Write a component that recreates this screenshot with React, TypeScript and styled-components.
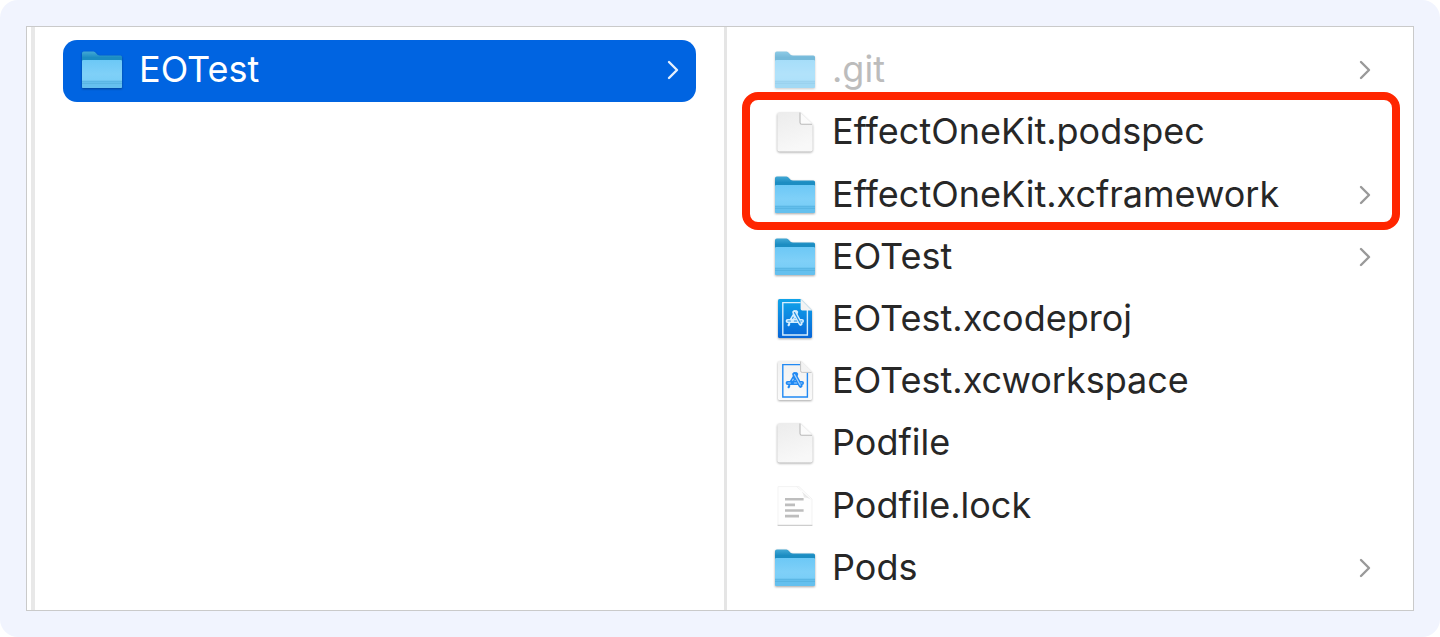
import React, { useId } from "react";
import styled, { createGlobalStyle } from "styled-components";

type Kind = "folder" | "document" | "text" | "project" | "workspace";

interface Entry {
  name: string;
  kind: Kind;
  opens?: boolean;
  hidden?: boolean;
}

const rootEntries: Entry[] = [{ name: "EOTest", kind: "folder", opens: true }];

const projectEntries: Entry[] = [
  { name: ".git", kind: "folder", opens: true, hidden: true },
  { name: "EffectOneKit.podspec", kind: "document" },
  { name: "EffectOneKit.xcframework", kind: "folder", opens: true },
  { name: "EOTest", kind: "folder", opens: true },
  { name: "EOTest.xcodeproj", kind: "project" },
  { name: "EOTest.xcworkspace", kind: "workspace" },
  { name: "Podfile", kind: "document" },
  { name: "Podfile.lock", kind: "text" },
  { name: "Pods", kind: "folder", opens: true },
];

const GlobalStyle = createGlobalStyle`
  *, *::before, *::after { box-sizing: border-box; }
  body { margin: 0; background: #fff; }
`;

const Frame = styled.main`
  display: flex;
  min-height: 100vh;
  padding: 26px;
  border-radius: 18px;
  background: #f1f4fe;
  font-family: Inter, "Liberation Sans", sans-serif;
`;

const Browser = styled.div`
  display: flex;
  flex: 1;
  min-width: 0;
  border: 1px solid #cacaca;
  background: #fff;
`;

const Gutter = styled.div`
  flex: none;
  width: 8px;
  border-right: 4px solid #e8e8e8;
`;

const Column = styled.section<{ $basis: number; $divided?: boolean }>`
  flex: 1 1 ${(p) => p.$basis}px;
  min-width: 0;
  padding: ${(p) => (p.$divided ? "13px 28px 10px" : "12px 25px 10px 28px")};
  border-right: ${(p) => (p.$divided ? "3px solid #e5e5e5" : "none")};
`;

const List = styled.ul<{ $minHeight?: number; $marked?: boolean }>`
  position: relative;
  display: grid;
  grid-auto-rows: minmax(62px, 1fr);
  min-height: ${(p) => p.$minHeight ?? 0}px;
  margin: 0;
  padding: 0;
  list-style: none;

  &::after {
    content: ${(p) => (p.$marked ? '""' : "none")};
    position: absolute;
    grid-row: 2 / span 2;
    inset: -9px -12px -4px -13px;
    border: 8px solid #ff2600;
    border-radius: 16px;
    pointer-events: none;
  }
`;

const Item = styled.li`
  display: flex;
  min-width: 0;
`;

const Row = styled.button<{ $selected?: boolean; $hidden?: boolean }>`
  display: flex;
  flex: 1;
  align-items: center;
  gap: 13px;
  min-width: 0;
  padding: ${(p) => (p.$selected ? "0 16px 2px 15px" : "0 16px")};
  border: 0;
  border-radius: 14px;
  background: ${(p) => (p.$selected ? "#0064e1" : "transparent")};
  color: ${(p) => (p.$selected ? "#fff" : p.$hidden ? "#bcbcbc" : "#272727")};
  font: inherit;
  font-size: 36px;
  line-height: 44px;
  text-align: left;
`;

const Name = styled.span`
  flex: 1;
  min-width: 0;
  padding-bottom: 2px;
  overflow: hidden;
  text-overflow: ellipsis;
  white-space: nowrap;
`;

const Icon = styled.svg<{ $faded?: boolean; $flat?: boolean }>`
  flex: none;
  width: 48px;
  height: 48px;
  opacity: ${(p) => (p.$faded ? 0.6 : 1)};
  filter: ${(p) => (p.$flat ? "none" : "drop-shadow(0 1px 1px rgba(0, 0, 0, 0.35))")};
`;

const Chevron = styled.svg<{ $selected?: boolean }>`
  flex: none;
  width: 14px;
  height: 20px;
  fill: none;
  stroke: ${(p) => (p.$selected ? "#e6f0fd" : "#999")};
  stroke-width: 2.4;
  stroke-linecap: round;
  stroke-linejoin: round;
`;

function FolderIcon({ faded }: { faded?: boolean }) {
  const id = useId();
  return (
    <Icon viewBox="0 0 48 48" $faded={faded} aria-hidden="true">
      <defs>
        <linearGradient id={`${id}b`} x1="0" y1="0" x2="0" y2="1">
          <stop offset="0" stopColor="#43a9d6" />
          <stop offset="0.25" stopColor="#1c8dc2" />
        </linearGradient>
        <linearGradient id={`${id}f`} x1="0" y1="0" x2="0" y2="1">
          <stop offset="0" stopColor="#6cc8f6" />
          <stop offset="0.5" stopColor="#7fd0f8" />
          <stop offset="1" stopColor="#73cbf6" />
        </linearGradient>
      </defs>
      <path
        d="M4 7.2Q4 5.4 5.8 5.4H15.4C18 5.4 18.6 9.4 22 9.4H42.4Q44 9.4 44 11V30H4Z"
        fill={`url(#${id}b)`}
      />
      <path
        d="M4 15Q4 14 5.2 14H42.8Q44 14 44 15V40.4Q44 42 42.4 42H5.6Q4 42 4 40.4Z"
        fill={`url(#${id}f)`}
      />
      <path d="M4 35H44V40.4Q44 42 42.4 42H5.6Q4 42 4 40.4Z" fill="#65c0ee" />
      <path d="M4 35.2H44M4 37.4H44" stroke="#52afdc" strokeWidth="0.7" />
    </Icon>
  );
}

function DocumentIcon() {
  const id = useId();
  return (
    <Icon viewBox="0 0 48 48" aria-hidden="true">
      <defs>
        <linearGradient id={id} x1="0" y1="0" x2="0.3" y2="1">
          <stop offset="0" stopColor="#ececec" />
          <stop offset="1" stopColor="#f8f8f8" />
        </linearGradient>
      </defs>
      <path
        d="M6.4 6.2Q6.4 4.4 8.2 4.4H29L41.6 16.4V41.6Q41.6 43.4 39.8 43.4H8.2Q6.4 43.4 6.4 41.6Z"
        fill={`url(#${id})`}
      />
      <path d="M29 4.4V14.4Q29 16.2 30.8 16.2H41.6Z" fill="#fbfbfb" />
      <path d="M29 4.6V14.4Q29 16.2 30.8 16.2H41" fill="none" stroke="#b9b9b9" strokeWidth="1.1" />
    </Icon>
  );
}

function TextIcon() {
  const id = useId();
  return (
    <Icon viewBox="0 0 48 48" $flat aria-hidden="true">
      <defs>
        <linearGradient id={id} x1="0" y1="1" x2="1" y2="0">
          <stop offset="0.3" stopColor="#f2f2f2" />
          <stop offset="1" stopColor="#c6c6c6" />
        </linearGradient>
      </defs>
      <path d="M7 43V4.6H28L41 17V43" fill="#fefefe" stroke="#f3f3f3" />
      <path d="M25 4.2 41.6 19Q38 15.2 33 15.4Q32 8 25 4.2Z" fill={`url(#${id})`} />
      <path d="M6.6 43.4H41.4" stroke="#cdcdcd" strokeWidth="1.2" />
      <path
        d="M14 17.3H32.6M14 22.9H24M14 28.5H32.6M14 34.1H28"
        stroke="#bdbdbd"
        strokeWidth="2.6"
      />
    </Icon>
  );
}

function AppStoreGlyph({ color, core }: { color: string; core: string }) {
  return (
    <g fill="none" strokeLinecap="round" strokeLinejoin="round">
      <g stroke={color}>
        <path d="M16.6 26H31" strokeWidth="4" />
        <path d="M25.2 17.2 20 26" strokeWidth="4" />
        <path d="M23.2 17.2 29.6 28.8" strokeWidth="4" />
        <path d="M18.2 29 17.6 30.2" strokeWidth="2.2" />
      </g>
      <g stroke={core} strokeWidth="1.2">
        <path d="M17 26H19.4M23.4 26H25.6M29.8 26H30.8" />
        <path d="M23.5 17.6 29.3 28.2" />
        <path d="M21.6 23.2 22.2 22.2" />
      </g>
    </g>
  );
}

function XcodeIcon({ solid }: { solid?: boolean }) {
  const id = useId();
  const ink = solid ? "#d6eefe" : "#2189f3";
  return (
    <Icon viewBox="0 0 48 48" aria-hidden="true">
      <defs>
        <linearGradient id={id} x1="0" y1="0" x2="0" y2="1">
          <stop offset="0" stopColor={solid ? "#10a4e9" : "#f1f1f1"} />
          <stop offset="1" stopColor={solid ? "#0866d8" : "#fafafa"} />
        </linearGradient>
      </defs>
      <path
        d="M7 5.6Q7 4 8.6 4H29.6L41 15.4V41.4Q41 43 39.4 43H8.6Q7 43 7 41.4Z"
        fill={`url(#${id})`}
      />
      <path d="M29.6 7.6H11.8V40H36.4V15" fill="none" stroke={ink} strokeWidth="1.4" />
      <path d="M29.6 4V13.8Q29.6 15.4 31.2 15.4H41Z" fill="#f3f3f3" />
      {!solid && (
        <path d="M29.6 4.4V13.8Q29.6 15.4 31.2 15.4H40.6" fill="none" stroke="#c4c4c4" />
      )}
      <AppStoreGlyph color={ink} core={solid ? "#2a94e4" : "#a9d2fa"} />
    </Icon>
  );
}

function EntryIcon({ entry }: { entry: Entry }) {
  switch (entry.kind) {
    case "folder":
      return <FolderIcon faded={entry.hidden} />;
    case "text":
      return <TextIcon />;
    case "project":
      return <XcodeIcon solid />;
    case "workspace":
      return <XcodeIcon />;
    default:
      return <DocumentIcon />;
  }
}

function EntryRow({ entry, selected }: { entry: Entry; selected?: boolean }) {
  return (
    <Item>
      <Row
        type="button"
        $selected={selected}
        $hidden={entry.hidden}
        aria-current={selected ? "true" : undefined}
      >
        <EntryIcon entry={entry} />
        <Name>{entry.name}</Name>
        {entry.opens && (
          <Chevron viewBox="0 0 14 20" $selected={selected} aria-hidden="true">
            <path d="M3 2 11 10 3 18" />
          </Chevron>
        )}
      </Row>
    </Item>
  );
}

export default function App() {
  return (
    <>
      <GlobalStyle />
      <Frame>
        <Browser>
          <Gutter />
          <Column $basis={692} $divided aria-label="Projects">
            <List>
              {rootEntries.map((entry) => (
                <EntryRow key={entry.name} entry={entry} selected />
              ))}
            </List>
          </Column>
          <Column $basis={686} aria-label="EOTest contents">
            <List $minHeight={560} $marked>
              {projectEntries.map((entry) => (
                <EntryRow key={entry.name} entry={entry} />
              ))}
            </List>
          </Column>
        </Browser>
      </Frame>
    </>
  );
}
